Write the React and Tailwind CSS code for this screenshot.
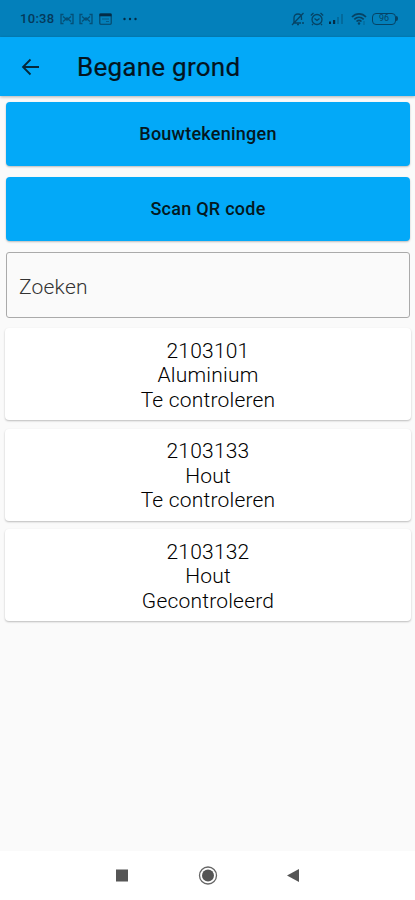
import React, { useState } from 'react'

const items = [
  { id: '2103101', material: 'Aluminium', status: 'Te controleren' },
  { id: '2103133', material: 'Hout', status: 'Te controleren' },
  { id: '2103132', material: 'Hout', status: 'Gecontroleerd' },
]

const CastIcon = () => (
  <svg width="14" height="12" viewBox="0 0 14 12" fill="none" stroke="currentColor" strokeWidth="1.3">
    <path d="M3.500 1.500H1v9h2.500M10.500 1.500H13v9h-2.500" />
    <path d="M3 3.500l3 2.500-3 2.500M11 3.500L8 6l3 2.500" />
    <circle cx="7" cy="6" r="1" />
  </svg>
)

const StatusBar = () => (
  <div className="h-[37px] shrink-0 bg-[#0380bb] flex items-center justify-between pl-5 pr-[17px] text-[#064365]">
    <div className="flex items-center h-full">
      <p className="w-[34px] text-[13px] leading-none font-medium tracking-[0.3px] whitespace-nowrap text-[#05395a]">10:38</p>
      <div className="ml-[6px] opacity-80"><CastIcon /></div>
      <div className="ml-[5px] opacity-80"><CastIcon /></div>
      <svg className="ml-[6px]" width="13" height="12" viewBox="0 0 13 12" fill="none" stroke="currentColor" strokeWidth="1.100">
        <rect x="0.800" y="0.800" width="11.400" height="10.400" rx="1" />
        <path d="M0.500 2h12" stroke="#042b45" strokeWidth="2.600" />
        <path d="M3 6h7M7 8.500h3" opacity="0.600" />
      </svg>
      <svg className="ml-[11px]" width="14" height="4" viewBox="0 0 14 4" fill="#042b45">
        <circle cx="1.500" cy="2" r="1.200" />
        <circle cx="7" cy="2" r="1.200" />
        <circle cx="12.500" cy="2" r="1.200" />
      </svg>
    </div>
    <div className="flex items-center h-full">
      <svg width="14" height="14" viewBox="0 0 14 14" fill="none" stroke="currentColor" strokeWidth="1.300">
        <path d="M2 11h8M3 10.500V6c0-2.500 1.500-4 4-4s3.500 1.500 3.500 4v2M12.500 1L1 13" />
        <path d="M6 12.500h2" />
        <circle cx="12" cy="11" r="1" fill="currentColor" stroke="none" />
      </svg>
      <svg className="ml-[5px]" width="14" height="14" viewBox="0 0 14 14" fill="none" stroke="currentColor" strokeWidth="1.300">
        <circle cx="7" cy="7.500" r="5" />
        <path d="M0.800 3.500L3.500 1M13.200 3.500L10.500 1M4.500 6.500L7 8.500l2.500-2M3 12l-1 1.200M11 12l1 1.200" />
      </svg>
      <svg className="ml-[5px]" width="15" height="13" viewBox="0 0 15 13" fill="currentColor">
        <rect x="0" y="9.500" width="2" height="2.500" fill="#042b45" />
        <rect x="4" y="8" width="2.200" height="4" fill="#042b45" />
        <rect x="8" y="5" width="2" height="7" opacity="0.350" />
        <rect x="12" y="2" width="2" height="10" opacity="0.350" />
      </svg>
      <svg className="ml-[7px]" width="16" height="14" viewBox="0 0 16 14" fill="none" stroke="currentColor" strokeWidth="1.700">
        <path d="M1 5c4-4.200 10-4.200 14 0M3.300 7.300c2.800-2.700 6.600-2.700 9.400 0M5.500 9.500c1.500-1.400 3.500-1.400 5 0" />
        <circle cx="8" cy="11.500" r="1.200" fill="currentColor" stroke="none" />
        <path d="M13 9v4" strokeWidth="1" opacity="0.500" />
      </svg>
      <div className="ml-[5px] w-[24px] h-[12px] rounded-[4px] border-[1.5px] border-current flex items-center justify-center text-[9px] leading-none">96</div>
      <div className="w-[2px] h-[5px] bg-current rounded-r-sm" />
    </div>
  </div>
)

const App = () => {
  const [search, setSearch] = useState('')

  return (
    <div className="w-full h-screen bg-[#fafafa] flex flex-col overflow-hidden font-['Roboto',sans-serif]">
      <StatusBar />
      <header className="h-[59px] shrink-0 bg-[#03a9f8] flex items-center shadow-[0_1px_3px_rgba(0,0,0,0.3)]">
        <svg className="ml-[21px] mt-[1px]" width="19" height="18" viewBox="0 0 19 18" fill="none" stroke="#06293b" strokeWidth="1.800">
          <path d="M18 9H2M9.500 1.500L2 9l7.500 7.500" />
        </svg>
        <h1 className="ml-[37px] text-[26px] leading-8 tracking-[0.25px] text-[#03141e] [-webkit-text-stroke:0.2px]">Begane grond</h1>
      </header>

      <main className="flex-1 px-[5px] pt-[6px]">
        <div className="pl-px flex flex-col gap-[11px]">
          <button className="h-16 pb-[2px] rounded-[4px] bg-[#03a9f8] text-[#041821] text-[18px] font-medium tracking-[0.25px] shadow-[0_1px_2px_rgba(0,0,0,0.25)]">Bouwtekeningen</button>
          <button className="h-16 pb-[2px] rounded-[4px] bg-[#03a9f8] text-[#041821] text-[18px] font-medium tracking-[0.25px] shadow-[0_1px_2px_rgba(0,0,0,0.25)]">Scan QR code</button>
          <input
            className="h-[66px] pt-[3px] rounded-[3px] border border-[#aaaaaa] bg-[#fafafa] px-3 text-[21px] font-light tracking-[0.2px] text-black placeholder:text-[#333333] outline-none"
            placeholder="Zoeken"
            value={search}
            onChange={(e) => setSearch(e.target.value)}
          />
        </div>
        <div className="mt-[10px] -mr-px flex flex-col gap-[8.5px]">
          {items.map((item) => (
            <div className="h-[92px] pt-[10.5px] rounded-[4px] bg-white text-center text-[21px] leading-[24.5px] font-light tracking-[0.2px] text-black shadow-[0_1px_2px_rgba(0,0,0,0.25)]" key={item.id}>
              <p>{item.id}</p>
              <p>{item.material}</p>
              <p>{item.status}</p>
            </div>
          ))}
        </div>
      </main>

      <nav className="h-[49px] shrink-0 bg-white">
        <svg className="mx-auto" width="200" height="49" viewBox="0 0 200 49" fill="#555555">
          <rect x="8" y="18.500" width="12" height="12" />
          <circle cx="100" cy="24.500" r="6" />
          <circle cx="100" cy="24.500" r="8.500" fill="none" stroke="#666666" strokeWidth="1.300" />
          <path d="M179 24.500l12-6.500v13z" />
        </svg>
      </nav>
    </div>
  )
}

export default App
